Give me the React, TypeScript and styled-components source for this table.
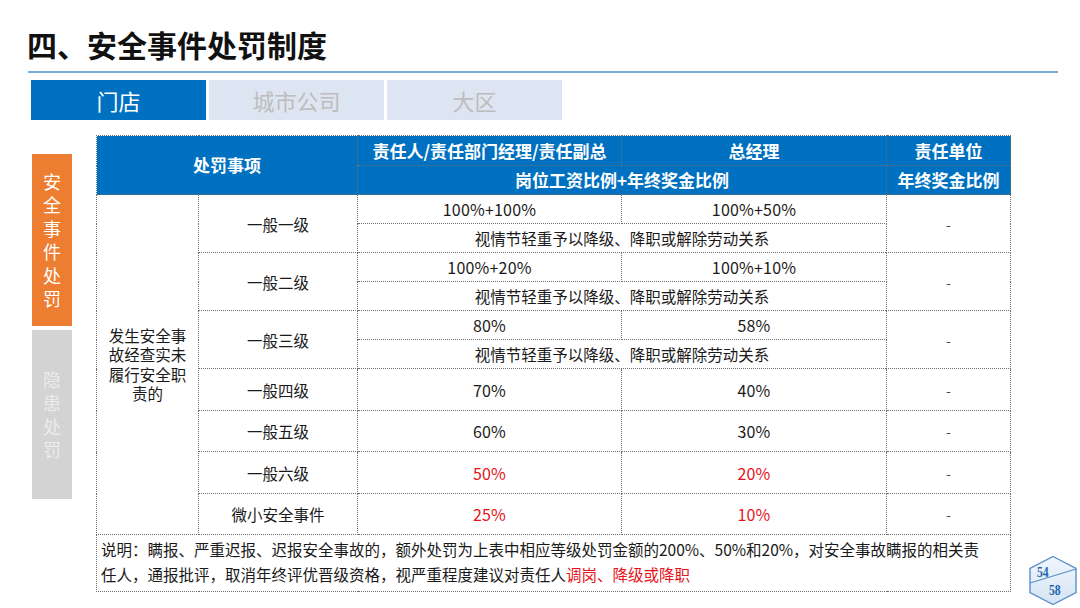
import React from "react";
import styled, { createGlobalStyle } from "styled-components";

const Global = createGlobalStyle`
  html, body { margin: 0; padding: 0; background: #fff; }
  * { box-sizing: border-box; }
`;

const FONT = `"Noto Sans CJK SC", "Noto Sans", sans-serif`;

const Page = styled.div`
  width: 1080px;
  height: 608px;
  position: relative;
  overflow: hidden;
  background: #fff;
  font-family: ${FONT};
  color: #1a1a1a;
`;

const Title = styled.h1`
  margin: 26px 0 0 27px;
  font-size: 30px;
  line-height: 36px;
  font-weight: 700;
  color: #111;
  letter-spacing: 0;
`;

const Rule = styled.div`
  margin: 9px 22px 0 28px;
  height: 2px;
  background: #79acdc;
`;

const Tabs = styled.div`
  display: flex;
  gap: 3px;
  margin: 7px 0 0 31px;
`;

const Tab = styled.div<{ $active?: boolean }>`
  width: 175px;
  height: 40px;
  display: flex;
  align-items: center;
  justify-content: center;
  font-size: 22px;
  background: ${(p) => (p.$active ? "#0070c0" : "#dce5f1")};
  color: ${(p) => (p.$active ? "#fff" : "#bdbdbd")};
`;

const Main = styled.div`
  display: flex;
  margin: 15px 0 0 32px;
  gap: 24px;
`;

const Side = styled.div`
  display: flex;
  flex-direction: column;
  gap: 4px;
  padding-top: 19px;
`;

const SideTab = styled.div<{ $active?: boolean; $h: number }>`
  width: 40px;
  height: ${(p) => p.$h}px;
  display: flex;
  align-items: center;
  justify-content: center;
  background: ${(p) => (p.$active ? "#ed7d31" : "#d3d3d3")};
  color: ${(p) => (p.$active ? "#fff" : "#ebebeb")};
`;

const VText = styled.span`
  width: 18px;
  font-size: 18px;
  line-height: 23.5px;
  text-align: center;
  word-break: break-all;
`;

const Table = styled.table`
  border-collapse: collapse;
  table-layout: fixed;
  width: 914px;
  font-size: 15.5px;
  td, th { border: 1px dotted #6e6e6e; padding: 0; text-align: center; vertical-align: middle; }
`;

const Row = styled.tr<{ $h: number }>`
  height: ${(p) => p.$h}px;
`;

const Th = styled.th`
  background: #0070c0;
  color: #fff;
  font-size: 17px;
  font-weight: 700;
  line-height: 20px;
`;

const Td = styled.td<{ $red?: boolean }>`
  color: ${(p) => (p.$red ? "#e5141b" : "#1a1a1a")};
  line-height: 20px;
`;

const Num = styled.span`
  font-size: 16px;
  letter-spacing: 0.2px;
`;

const Cause = styled.td`
  padding: 0 10px !important;
  line-height: 19.5px;
  word-break: break-all;
`;

const Dash = styled.td`
  color: #444;
  font-size: 14px;
`;

const Note = styled.td`
  text-align: left !important;
  padding: 2px 0 4px 4px !important;
  font-size: 15.5px;
  line-height: 25px;
`;

const Red = styled.span`
  color: #e5141b;
`;

const Badge = styled.div`
  position: absolute;
  left: 1027px;
  top: 555px;
  width: 52px;
  height: 52px;
`;

const rel = "视情节轻重予以降级、降职或解除劳动关系";

function PageBadge() {
  return (
    <Badge>
      <svg width="52" height="52" viewBox="0 0 52 52">
        <defs>
          <linearGradient id="hx" x1="0" y1="0" x2="0" y2="1">
            <stop offset="0" stopColor="#f0f6fc" />
            <stop offset="1" stopColor="#d5e5f5" />
          </linearGradient>
        </defs>
        <polygon points="26,1.5 49,13.5 49,37.5 26,49.5 3,37.5 3,13.5" fill="url(#hx)" stroke="#5b8fc7" strokeWidth="1.4" />
        <line x1="3" y1="28" x2="49" y2="14" stroke="#5b8fc7" strokeWidth="1.1" />
        <text x="0" y="0" transform="translate(10 22) scale(0.78 1)" fontFamily="'Liberation Serif', serif" fontSize="15" fontWeight="700" fill="#1f63ad">54</text>
        <text x="0" y="0" transform="translate(22 40) scale(0.78 1)" fontFamily="'Liberation Serif', serif" fontSize="15" fontWeight="700" fill="#1f63ad">58</text>
      </svg>
    </Badge>
  );
}

export default function App() {
  return (
    <Page>
      <Global />
      <Title>四、安全事件处罚制度</Title>
      <Rule />
      <Tabs>
        <Tab $active>门店</Tab>
        <Tab>城市公司</Tab>
        <Tab>大区</Tab>
      </Tabs>
      <Main>
        <Side>
          <SideTab $active $h={172}>
            <VText>安全事件处罚</VText>
          </SideTab>
          <SideTab $h={169}>
            <VText>隐患处罚</VText>
          </SideTab>
        </Side>
        <Table>
          <colgroup>
            <col style={{ width: 102 }} />
            <col style={{ width: 159 }} />
            <col style={{ width: 264 }} />
            <col style={{ width: 265 }} />
            <col style={{ width: 124 }} />
          </colgroup>
          <thead>
            <Row $h={30}>
              <Th colSpan={2} rowSpan={2}>处罚事项</Th>
              <Th>责任人/责任部门经理/责任副总</Th>
              <Th>总经理</Th>
              <Th>责任单位</Th>
            </Row>
            <Row $h={29}>
              <Th colSpan={2}>岗位工资比例+年终奖金比例</Th>
              <Th>年终奖金比例</Th>
            </Row>
          </thead>
          <tbody>
            <Row $h={29}>
              <Cause rowSpan={10}>发生安全事故经查实未履行安全职责的</Cause>
              <Td rowSpan={2}>一般一级</Td>
              <Td><Num>100%+100%</Num></Td>
              <Td><Num>100%+50%</Num></Td>
              <Dash rowSpan={2}>-</Dash>
            </Row>
            <Row $h={29}>
              <Td colSpan={2}>{rel}</Td>
            </Row>
            <Row $h={29}>
              <Td rowSpan={2}>一般二级</Td>
              <Td><Num>100%+20%</Num></Td>
              <Td><Num>100%+10%</Num></Td>
              <Dash rowSpan={2}>-</Dash>
            </Row>
            <Row $h={29}>
              <Td colSpan={2}>{rel}</Td>
            </Row>
            <Row $h={29}>
              <Td rowSpan={2}>一般三级</Td>
              <Td><Num>80%</Num></Td>
              <Td><Num>58%</Num></Td>
              <Dash rowSpan={2}>-</Dash>
            </Row>
            <Row $h={29}>
              <Td colSpan={2}>{rel}</Td>
            </Row>
            <Row $h={42}>
              <Td>一般四级</Td>
              <Td><Num>70%</Num></Td>
              <Td><Num>40%</Num></Td>
              <Dash>-</Dash>
            </Row>
            <Row $h={41}>
              <Td>一般五级</Td>
              <Td><Num>60%</Num></Td>
              <Td><Num>30%</Num></Td>
              <Dash>-</Dash>
            </Row>
            <Row $h={42}>
              <Td>一般六级</Td>
              <Td $red><Num>50%</Num></Td>
              <Td $red><Num>20%</Num></Td>
              <Dash>-</Dash>
            </Row>
            <Row $h={41}>
              <Td>微小安全事件</Td>
              <Td $red><Num>25%</Num></Td>
              <Td $red><Num>10%</Num></Td>
              <Dash>-</Dash>
            </Row>
            <Row $h={55}>
              <Note colSpan={5}>
                说明：瞒报、严重迟报、迟报安全事故的，额外处罚为上表中相应等级处罚金额的200%、50%和20%，对安全事故瞒报的相关责
                <br />
                任人，通报批评，取消年终评优晋级资格，视严重程度建议对责任人<Red>调岗、降级或降职</Red>
              </Note>
            </Row>
          </tbody>
        </Table>
      </Main>
      <PageBadge />
    </Page>
  );
}
